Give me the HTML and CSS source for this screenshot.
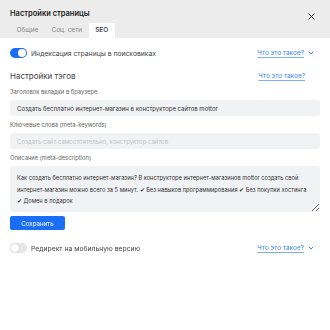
FILE: index.html
```html
<!DOCTYPE html>
<html lang="ru">
<head>
    <meta charset="UTF-8">
    <meta name="viewport" content="width=device-width, initial-scale=1.0">
    <title>Настройки страницы</title>
    <link rel="stylesheet" href="styles.css">
</head>
<body>
    <div class="modal">
        <div class="header">
            <div class="title">Настройки страницы</div>
            <svg class="close" width="7" height="7" viewBox="0 0 7 7">
                <path d="M0.5 0.5 L6.5 6.5 M6.5 0.5 L0.5 6.5" stroke="#333" stroke-width="1" fill="none"/>
            </svg>
            <div class="tabs">
                <div class="tab">Общие</div>
                <div class="tab">Соц. сети</div>
                <div class="tab active">SEO</div>
            </div>
        </div>

        <div class="content">
            <div class="switch-row">
                <div class="switch-left">
                    <span class="toggle on"><span class="knob"></span></span>
                    <span class="switch-text">Индексация страницы в поисковиках</span>
                </div>
                <a class="help">Что это такое?<svg class="chev" width="6" height="4" viewBox="0 0 6 4"><path d="M0.7 0.7 L3 3 L5.3 0.7" stroke="#3d86f0" stroke-width="1" fill="none"/></svg></a>
            </div>

            <div class="section-head">
                <span class="section-title">Настройки тэгов</span>
                <a class="help no-chev">Что это такое?</a>
            </div>

            <div class="field">
                <label class="field-label">Заголовок вкладки в браузере</label>
                <input class="field-input" type="text" value="Создать бесплатно интернет-магазин в конструкторе сайтов mottor">
            </div>
            <div class="field">
                <label class="field-label">Ключевые слова (meta-keywords)</label>
                <input class="field-input" type="text" placeholder="Создать сайт самостоятельно, конструктор сайтов">
            </div>
            <div class="field">
                <label class="field-label">Описание (meta-description)</label>
                <textarea class="field-area">Как создать бесплатно интернет-магазин? В конструкторе интернет-магазинов mottor создать свой интернет-магазин можно всего за 5 минут. ✔ Без навыков программирования ✔ Без покупки хостинга ✔ Домен в подарок</textarea>
            </div>

            <button class="save">Сохранить</button>

            <div class="switch-row redirect">
                <div class="switch-left">
                    <span class="toggle"><span class="knob"></span></span>
                    <span class="switch-text">Редирект на мобильную версию</span>
                </div>
                <a class="help">Что это такое?<svg class="chev" width="6" height="4" viewBox="0 0 6 4"><path d="M0.7 0.7 L3 3 L5.3 0.7" stroke="#3d86f0" stroke-width="1" fill="none"/></svg></a>
            </div>
        </div>
    </div>
</body>
</html>
```

FILE: styles.css
```css
body {
    font-family: Inter, "Noto Sans", sans-serif;
    margin: 0;
    padding: 0;
    background-color: #fff;
    color: #333;
}
.modal {
    width: 330px;
}
.header {
    position: relative;
    height: 38px;
    background-color: #ececec;
}
.title {
    padding: 9px 10px 0;
    font-size: 7.5px;
    font-weight: 600;
    line-height: 10px;
    color: #222;
}
.close {
    position: absolute;
    right: 15px;
    top: 13px;
}
.tabs {
    display: flex;
    padding-left: 10px;
    margin-top: 4px;
}
.tab {
    height: 15px;
    line-height: 15px;
    padding: 0 6.5px;
    font-size: 6.5px;
    color: #8a8a8a;
}
.tab.active {
    background-color: #fff;
    color: #2b2b40;
    font-weight: 500;
}
.content {
    padding: 0 10px;
}
.switch-row {
    display: flex;
    justify-content: space-between;
    align-items: center;
    height: 10px;
    margin-top: 10px;
}
.switch-left {
    display: flex;
    align-items: center;
}
.toggle {
    position: relative;
    display: inline-block;
    width: 17px;
    height: 10px;
    border-radius: 5px;
    background-color: #e6e6e6;
    margin-right: 4px;
}
.toggle .knob {
    position: absolute;
    top: 1px;
    left: 1px;
    width: 8px;
    height: 8px;
    border-radius: 50%;
    background-color: #fff;
    box-shadow: 0 0 1px rgba(0, 0, 0, 0.3);
}
.toggle.on {
    background-color: #1a6ef5;
}
.toggle.on .knob {
    left: 8px;
    box-shadow: none;
}
.switch-text {
    font-size: 6.8px;
    color: #444;
}
.help {
    display: flex;
    align-items: center;
    font-size: 6.5px;
    color: #3d86f0;
    text-decoration: underline;
    text-decoration-color: #7fb0f5;
    text-underline-offset: 1.5px;
    margin-right: 6px;
}
.help.no-chev {
    margin-right: 15px;
}
.chev {
    margin-left: 4px;
}
.section-head {
    display: flex;
    justify-content: space-between;
    align-items: center;
    height: 12px;
    margin-top: 12px;
}
.section-title {
    font-size: 8px;
    color: #444;
}
.field {
    display: flex;
    flex-direction: column;
}
.field-label {
    font-size: 5.8px;
    line-height: 8px;
    color: #666;
    margin-top: 6px;
    margin-bottom: 4px;
}
.field + .field .field-label {
    margin-top: 5px;
}
.field-input, .field-area {
    box-sizing: border-box;
    width: 310px;
    border: none;
    border-radius: 3px;
    background-color: #f1f2f4;
    font-family: Inter, "Noto Sans", sans-serif;
    font-size: 6px;
    color: #333;
    outline: none;
}
.field-input {
    height: 16px;
    padding: 0 7px;
}
.field-input::placeholder {
    color: #c2c4c8;
}
.field-area {
    height: 46px;
    padding: 6px 10px 6px 7px;
    font-size: 5.7px;
    line-height: 11.7px;
    resize: vertical;
}
.save {
    display: block;
    margin-top: 4px;
    width: 55px;
    height: 14px;
    border: none;
    border-radius: 2px;
    background-color: #1a6ef5;
    color: #fff;
    font-family: Inter, "Noto Sans", sans-serif;
    font-size: 6.2px;
    padding: 0;
}
.switch-row.redirect {
    margin-top: 13px;
}
```
